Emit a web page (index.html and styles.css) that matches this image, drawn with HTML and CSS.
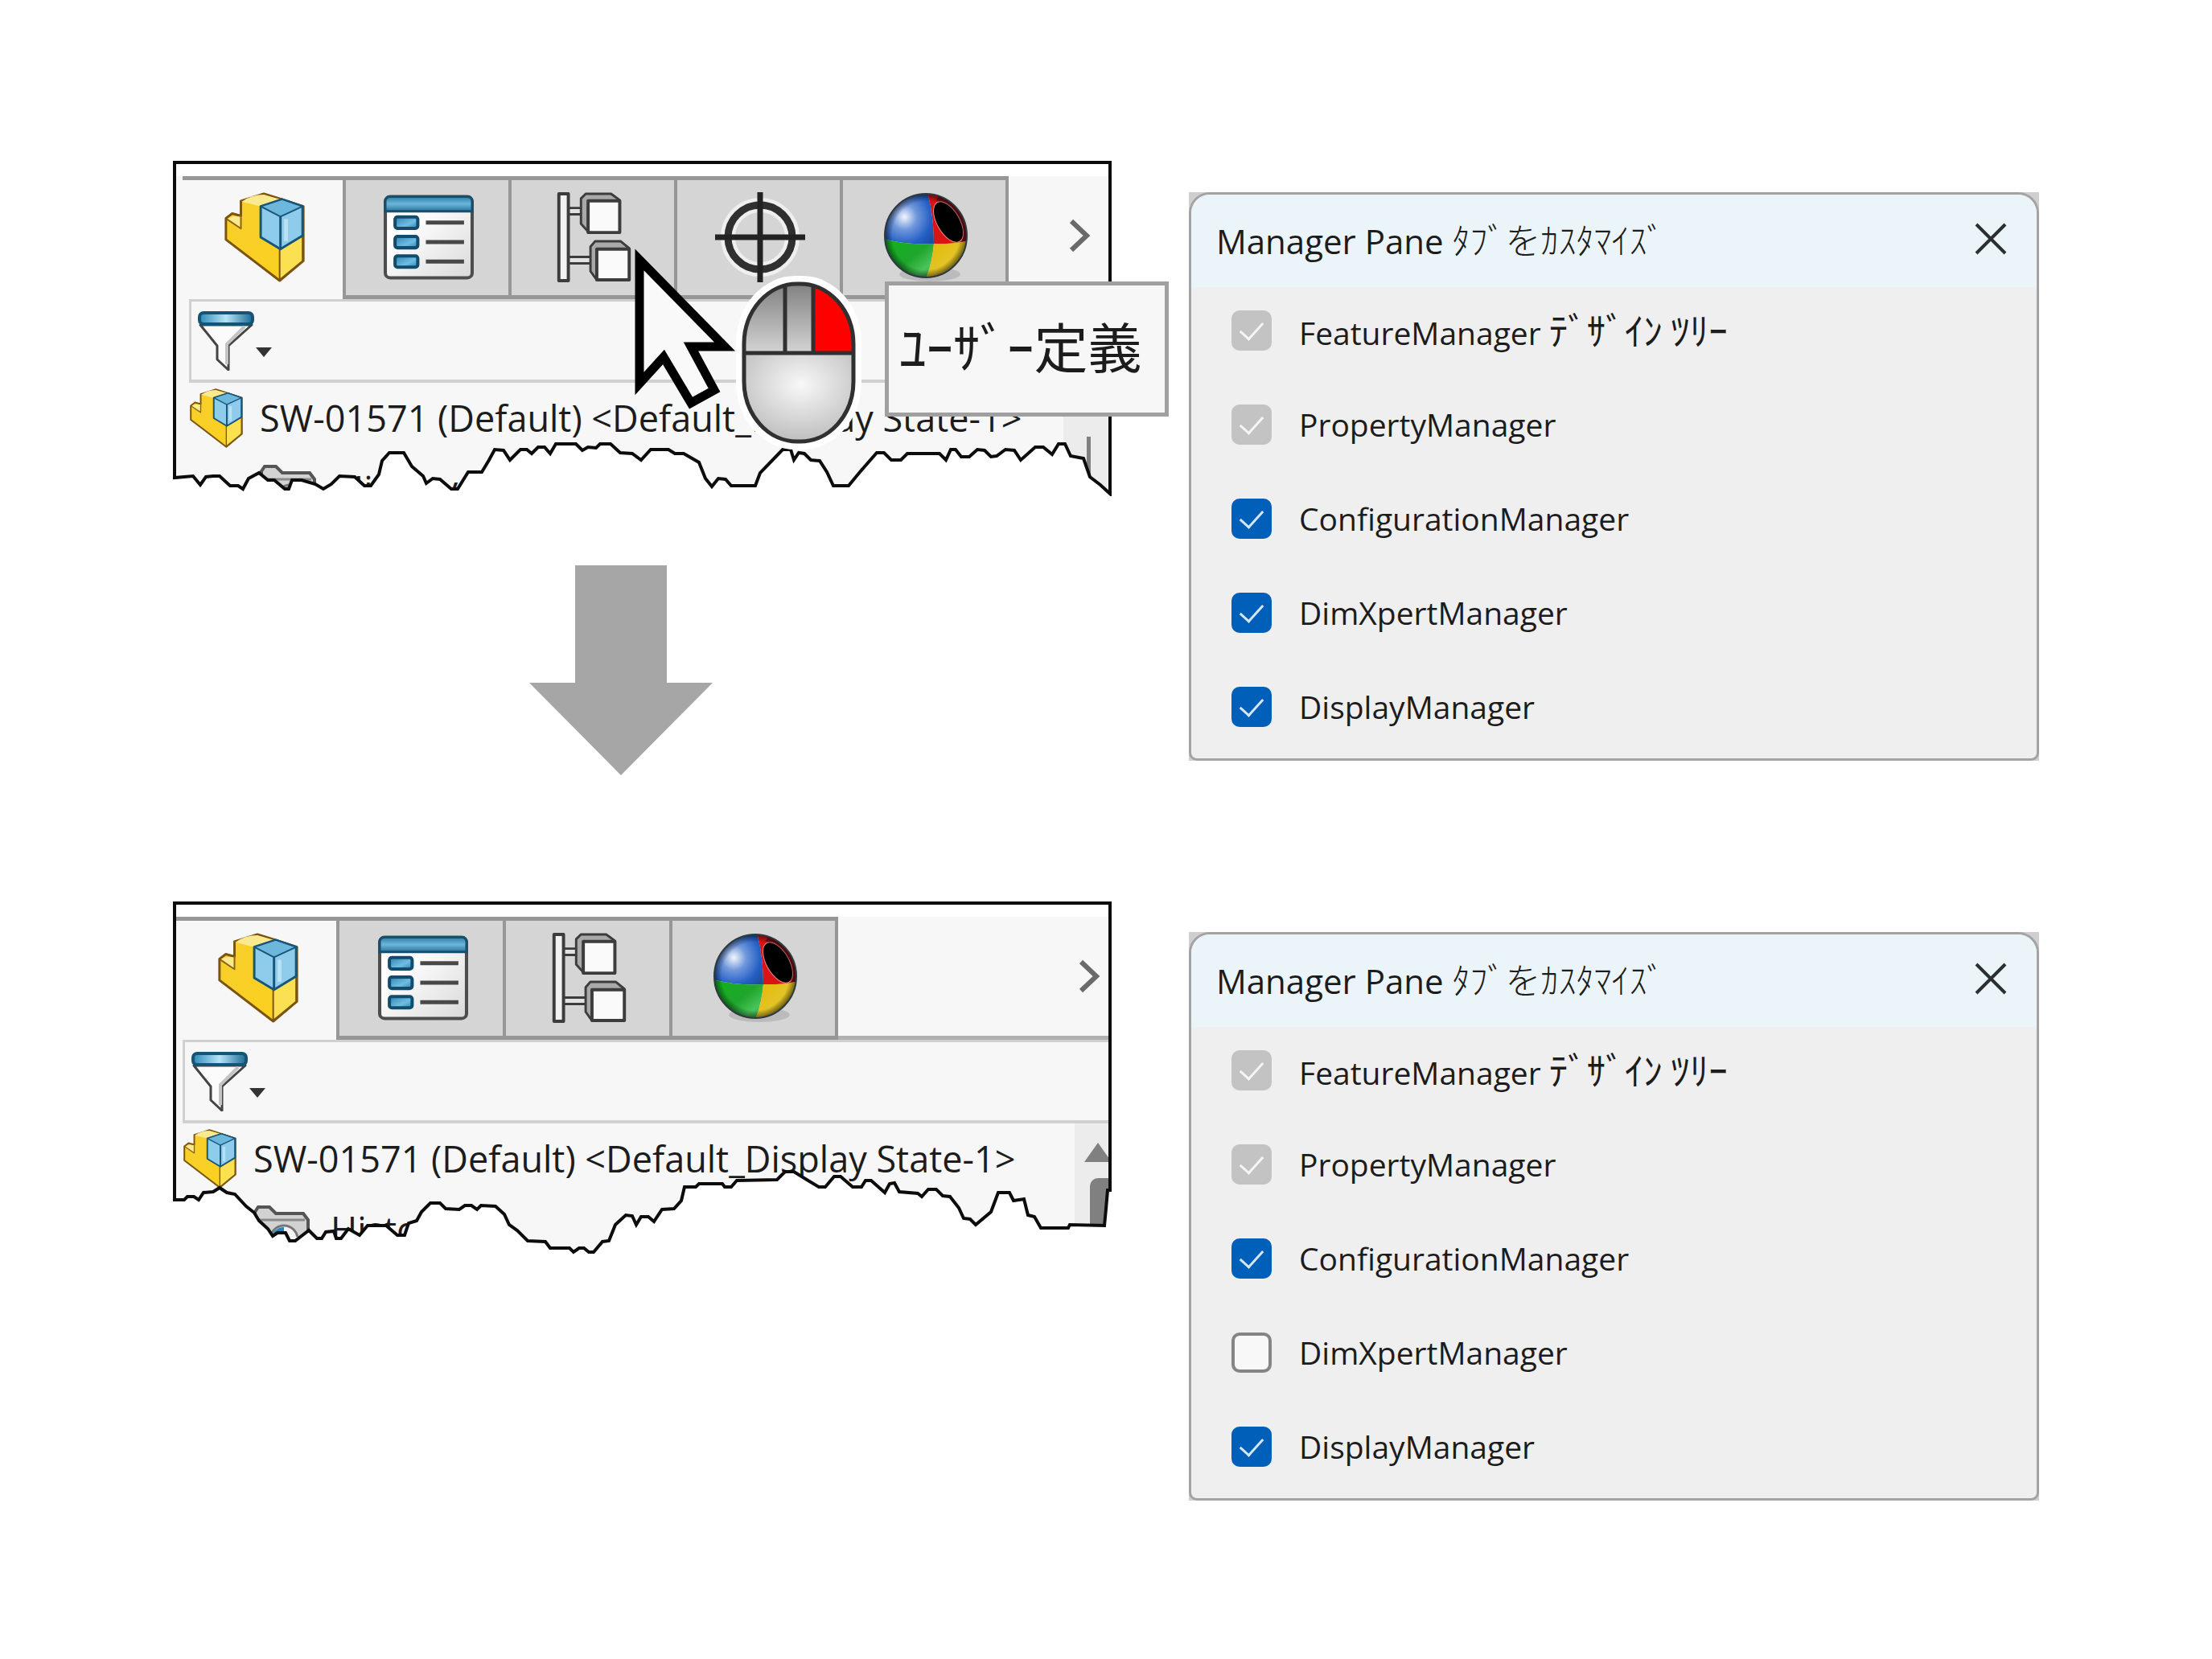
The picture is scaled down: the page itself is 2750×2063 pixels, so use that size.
FILE: index.html
```html
<!DOCTYPE html>
<html lang="ja">
<head>
<meta charset="utf-8">
<meta name="viewport" content="width=device-width, initial-scale=1">
<title>Manager Pane</title>
<link rel="stylesheet" href="styles.css">
</head>
<body>
<svg class="defs" aria-hidden="true">
  <defs>
    <linearGradient id="gBar" x1="0" y1="0" x2="0" y2="1"><stop offset="0" stop-color="#2f7ca3"/><stop offset=".5" stop-color="#6cb6dd"/><stop offset="1" stop-color="#2a7297"/></linearGradient>
    <linearGradient id="gBox" x1="0" y1="0" x2="1" y2="1"><stop offset="0" stop-color="#2d83b0"/><stop offset=".6" stop-color="#6fbde4"/><stop offset="1" stop-color="#2d83b0"/></linearGradient>
    <linearGradient id="gSheet" x1="0" y1="0" x2="1" y2="1"><stop offset=".3" stop-color="#fff"/><stop offset="1" stop-color="#d9d9d9"/></linearGradient>
    <linearGradient id="gRim" x1="0" y1="0" x2="1" y2="0"><stop offset="0" stop-color="#2f8bb8"/><stop offset=".5" stop-color="#b5e4f8"/><stop offset="1" stop-color="#1b6b94"/></linearGradient>
    <linearGradient id="gYellow" x1="0" y1="0" x2="1" y2="1"><stop offset="0" stop-color="#f7cf2e"/><stop offset="1" stop-color="#fbd01c"/></linearGradient>
    <radialGradient id="gBlue" cx=".42" cy=".48" r=".7"><stop offset="0" stop-color="#f2f6fd"/><stop offset=".35" stop-color="#6f97dc"/><stop offset=".75" stop-color="#245fc4"/><stop offset="1" stop-color="#1d4f9f"/></radialGradient>
    <linearGradient id="gGreen" x1="0" y1="0" x2="1" y2="1"><stop offset="0" stop-color="#12b41c"/><stop offset=".5" stop-color="#1fa52c"/><stop offset=".75" stop-color="#49c35a"/><stop offset="1" stop-color="#2f9a3d"/></linearGradient>
    <linearGradient id="gGold" x1="0" y1="0" x2="1" y2="1"><stop offset="0" stop-color="#e6b800"/><stop offset=".5" stop-color="#e3c326"/><stop offset="1" stop-color="#8d7a10"/></linearGradient>
    <radialGradient id="gShade" cx=".5" cy=".5" r=".5"><stop offset=".8" stop-color="#000" stop-opacity="0"/><stop offset="1" stop-color="#000" stop-opacity=".55"/></radialGradient>
    <radialGradient id="gMouse" cx=".52" cy=".35" r=".65"><stop offset="0" stop-color="#f8f8f8"/><stop offset="1" stop-color="#bdbdbd"/></radialGradient>
    <linearGradient id="gKey" x1="0" y1="0" x2="0" y2="1"><stop offset="0" stop-color="#7f7f7f"/><stop offset="1" stop-color="#d6d6d6"/></linearGradient>
    <clipPath id="cBall"><ellipse cx="53" cy="54" rx="51" ry="52"/></clipPath>
    <clipPath id="cMouse"><rect x="11" y="11" width="138" height="198" rx="67" ry="76"/></clipPath>
  </defs>
  <symbol id="part" viewBox="0 0 102 114">
    <g stroke-linejoin="round">
      <path d="M2 33 10 27 21 30V11L50 2 73 9 100 18V87L70 112 2 60Z" fill="url(#gYellow)" stroke="#7a5410" stroke-width="3"/>
      <path d="M22 12Q34 3 50 3L70 9 46 18Z" fill="#fbe98f"/>
      <path d="M4 34Q9 29 20 31V45Z" fill="#fbe98f"/>
      <path d="M21 29V46L3 34" fill="none" stroke="#8a6418" stroke-width="2"/>
      <path d="M70 72 99 55V87L70 111Z" fill="#fbe052" stroke="#7a5410" stroke-width="2"/>
      <path d="M73 9 99 18V55L71 72 46 57V18Z" fill="#8fcbea" stroke="#17567a" stroke-width="3"/>
      <path d="M46 18 73 9 99 18 71 31Z" fill="#6db7dc" stroke="#17567a" stroke-width="2"/>
      <path d="M71 31V72" stroke="#17567a" stroke-width="3"/>
      <path d="M78 34V62" stroke="#b9e1f4" stroke-width="5"/>
    </g>
  </symbol>
  <symbol id="props" viewBox="0 0 111 104">
    <rect x="2" y="2" width="107" height="100" rx="6" fill="url(#gSheet)" stroke="#4d4d4d" stroke-width="4"/>
    <path d="M2 20V8Q2 2 8 2H103Q109 2 109 8V20Z" fill="url(#gBar)" stroke="#174f6e" stroke-width="3"/>
    <g fill="url(#gBox)" stroke="#134c6b" stroke-width="4"><rect x="14" y="27" width="28" height="14" rx="3"/><rect x="14" y="51" width="28" height="14" rx="3"/><rect x="14" y="75" width="28" height="14" rx="3"/></g>
    <path d="M52 34H99M52 58H99M52 82H99" stroke="#484848" stroke-width="5"/>
  </symbol>
  <symbol id="config" viewBox="0 0 94 114">
    <g stroke="#3c3c3c" stroke-width="4" stroke-linejoin="round">
      <path d="M12 20H38V28H12ZM12 82H50V90H12Z" fill="#e2e2e2" stroke-width="3"/>
      <rect x="2" y="2" width="12" height="110" fill="#f2f2f2"/>
      <path d="M39 50 30 40V8L36 2H68L79 10V18H39Z" fill="#a9a9a9" stroke-width="3"/>
      <rect x="39" y="11" width="40" height="40" fill="#fafafa"/>
      <path d="M50 111 42 100V69L48 62H80L91 71V78H50Z" fill="#a9a9a9" stroke-width="3"/>
      <rect x="50" y="72" width="41" height="39" fill="#fafafa"/>
    </g>
  </symbol>
  <symbol id="target" viewBox="0 0 112 112">
    <circle cx="56" cy="56" r="40" fill="none" stroke="#efefef" stroke-width="18"/>
    <circle cx="56" cy="56" r="40" fill="none" stroke="#303030" stroke-width="9"/>
    <path d="M56 0V112M0 56H112" stroke="#222" stroke-width="7"/>
  </symbol>
  <symbol id="ball" viewBox="0 0 106 112">
    <ellipse cx="58" cy="102" rx="38" ry="9" fill="#000" opacity=".12"/>
    <g clip-path="url(#cBall)">
      <path d="M0 0H55Q63 30 63 64 30 66 0 58Z" fill="url(#gBlue)"/>
      <path d="M55 0H106V62Q84 65 63 64 63 30 55 0Z" fill="#d81414"/>
      <path d="M72 0H106V62L98 62Q100 30 66 10Z" fill="#7c0f12"/>
      <path d="M0 58Q30 66 63 64 61 90 51 112H0Z" fill="url(#gGreen)"/>
      <path d="M63 64Q84 65 106 60V112H51Q61 90 63 64Z" fill="url(#gGold)"/>
      <ellipse cx="81" cy="37" rx="14" ry="28" transform="rotate(-30 81 37)" fill="#000" stroke="#f08a8a" stroke-width="1"/>
      <ellipse cx="53" cy="54" rx="52" ry="53" fill="url(#gShade)"/>
    </g>
    <ellipse cx="53" cy="54" rx="51" ry="52" fill="none" stroke="#2e3a3f" stroke-width="2"/>
  </symbol>
  <symbol id="funnel" viewBox="0 0 70 74">
    <path d="M3 17 24 43V60L38 73V43L67 17Z" fill="#fbfbfb" stroke="#444" stroke-width="3" stroke-linejoin="round"/>
    <path d="M58 19 36 41V66" fill="none" stroke="#c4c4c4" stroke-width="4"/>
    <rect x="2" y="2" width="66" height="14" rx="5" fill="url(#gRim)" stroke="#155474" stroke-width="4"/>
  </symbol>
  <symbol id="folder" viewBox="0 0 70 60">
    <path d="M2 58V8L6 2H20L28 10H62L68 18V58Z" fill="#d2d2d2" stroke="#555" stroke-width="4"/>
    <path d="M4 18H64" stroke="#8a8a8a" stroke-width="3"/>
    <circle cx="38" cy="42" r="17" fill="#f4f4f4" stroke="#777" stroke-width="3"/>
    <path d="M38 42H22A16 16 0 0 1 38 27Z" fill="#2487b5"/>
  </symbol>
  <symbol id="chevron" viewBox="0 0 28 42"><path d="M4 3 23 21 4 39" fill="none" stroke="#6a6a6a" stroke-width="6"/></symbol>
  <symbol id="close" viewBox="0 0 40 40"><path d="M2 2 38 38M38 2 2 38" stroke="#2b2f31" stroke-width="4"/></symbol>
</svg>

<main class="board">
  <div class="column">
    <section class="panel panel-before">
      <div class="tabs" role="tablist">
        <button class="tab tab-active" type="button" role="tab" aria-label="FeatureManager"><svg class="icon"><use href="#part"/></svg></button>
        <button class="tab" type="button" role="tab" aria-label="PropertyManager"><svg class="icon"><use href="#props"/></svg></button>
        <button class="tab" type="button" role="tab" aria-label="ConfigurationManager"><svg class="icon"><use href="#config"/></svg></button>
        <button class="tab" type="button" role="tab" aria-label="DimXpertManager"><svg class="icon"><use href="#target"/></svg></button>
        <button class="tab tab-last" type="button" role="tab" aria-label="DisplayManager"><svg class="icon"><use href="#ball"/></svg></button>
        <div class="more"><button class="plain" type="button" aria-label="Next"><svg class="chevron"><use href="#chevron"/></svg></button></div>
      </div>
      <div class="filter"><button class="plain filter-button" type="button" aria-label="Filter"><svg class="funnel"><use href="#funnel"/></svg><span class="caret"></span></button></div>
      <div class="tree-area">
        <ul class="tree">
          <li class="node"><svg class="node-icon"><use href="#part"/></svg><span>SW-01571 (Default) &lt;Default_Display State-1&gt;</span></li>
          <li class="node node-child"><svg class="folder"><use href="#folder"/></svg><span>History</span></li>
        </ul>
        <div class="scroll"><span class="thumb thumb-thin"></span></div>
      </div>
      <svg class="torn" viewBox="0 0 1167 417" preserveAspectRatio="none" aria-hidden="true">
        <path class="torn-paper" d="M0 417V392L25 392 34 403 41 393 50 392 58 392 71 404 81 404 87 408 94 395 107 388 118 397 126 397 139 408 144 408 148 397 160 397 177 402 187 408 197 402 207 392 226 393 238 404 246 404 256 390 260 373 269 363 287 363 297 380 311 392 315 401 323 395 332 396 346 408 354 408 367 387 384 387 393 372 400 359 411 360 419 372 432 359 440 359 446 364 454 356 462 356 469 364 476 352 501 352 509 360 516 356 526 357 531 352 544 352 556 363 571 364 582 372 594 359 616 359 624 364 635 364 654 375 662 395 670 405 678 395 687 396 694 404 724 404 730 388 758 359 768 359 772 372 778 363 785 364 793 372 804 373 813 387 821 404 840 404 854 387 875 363 884 363 893 372 905 372 913 364 953 364 961 372 967 359 973 359 980 368 990 368 1000 359 1009 360 1017 368 1024 367 1035 359 1046 360 1054 372 1072 356 1082 356 1093 365 1101 352 1109 352 1116 367 1132 370 1140 393 1153 403 1165 415 1167 417Z"/>
        <path class="torn-line" d="M2 394V2H1165V414L1153 403 1140 393 1132 370 1116 367 1109 352 1101 352 1093 365 1082 356 1072 356 1054 372 1046 360 1035 359 1024 367 1017 368 1009 360 1000 359 990 368 980 368 973 359 967 359 961 372 953 364 913 364 905 372 893 372 884 363 875 363 854 387 840 404 821 404 813 387 804 373 793 372 785 364 778 363 772 372 768 359 758 359 730 388 724 404 694 404 687 396 678 395 670 405 662 395 654 375 635 364 624 364 616 359 594 359 582 372 571 364 556 363 544 352 531 352 526 357 516 356 509 360 501 352 476 352 469 364 462 356 454 356 446 364 440 359 432 359 419 372 411 360 400 359 393 372 384 387 367 387 354 408 346 408 332 396 323 395 315 401 311 392 297 380 287 363 269 363 260 373 256 390 246 404 238 404 226 393 207 392 197 402 187 408 177 402 160 397 148 397 144 408 139 408 126 397 118 397 107 388 94 395 87 408 81 404 71 404 58 392 50 392 41 393 34 403 25 392Z"/>
      </svg>
      <svg class="cursor" viewBox="0 0 130 204" aria-hidden="true"><path d="M8 15V169L38 136 72 193 101 177 72 123H114Z" fill="#f9f9f9" stroke="#000" stroke-width="11"/></svg>
      <svg class="mouse" viewBox="0 0 160 220" aria-hidden="true">
        <rect x="2" y="2" width="156" height="216" rx="74" ry="84" fill="#fff"/>
        <g clip-path="url(#cMouse)">
          <rect x="10" y="10" width="140" height="90" fill="url(#gKey)"/>
          <rect x="98" y="10" width="52" height="88" fill="#f00"/>
          <rect x="10" y="98" width="140" height="112" fill="url(#gMouse)"/>
          <path d="M63 10V98M98 10V98M10 98H150" stroke="#303030" stroke-width="5"/>
        </g>
        <rect x="12" y="12" width="136" height="196" rx="66" ry="75" fill="none" stroke="#303030" stroke-width="5"/>
      </svg>
      <div class="tip" role="tooltip">ﾕｰｻﾞｰ定義</div>
    </section>

    <svg class="arrow" viewBox="0 0 228 261" aria-hidden="true"><path d="M57 0H171V146H228L114 261 0 146H57Z" fill="#a6a6a6"/></svg>

    <section class="panel panel-after">
      <div class="tabs" role="tablist">
        <button class="tab tab-active" type="button" role="tab" aria-label="FeatureManager"><svg class="icon"><use href="#part"/></svg></button>
        <button class="tab" type="button" role="tab" aria-label="PropertyManager"><svg class="icon"><use href="#props"/></svg></button>
        <button class="tab" type="button" role="tab" aria-label="ConfigurationManager"><svg class="icon"><use href="#config"/></svg></button>
        <button class="tab tab-last" type="button" role="tab" aria-label="DisplayManager"><svg class="icon"><use href="#ball"/></svg></button>
        <div class="more"><button class="plain" type="button" aria-label="Next"><svg class="chevron"><use href="#chevron"/></svg></button></div>
      </div>
      <div class="filter"><button class="plain filter-button" type="button" aria-label="Filter"><svg class="funnel"><use href="#funnel"/></svg><span class="caret"></span></button></div>
      <div class="tree-area">
        <ul class="tree">
          <li class="node"><svg class="node-icon"><use href="#part"/></svg><span>SW-01571 (Default) &lt;Default_Display State-1&gt;</span></li>
          <li class="node node-child"><svg class="folder"><use href="#folder"/></svg><span>History</span></li>
        </ul>
        <div class="scroll"><span class="up"></span><span class="thumb"></span></div>
      </div>
      <svg class="torn" viewBox="0 0 1167 439" preserveAspectRatio="none" aria-hidden="true">
        <path class="torn-paper" d="M0 439V371L14 371 18 367 26 367 32 371 38 362 50 361 58 356 67 362 77 364 91 379 101 387 107 397 118 407 124 416 130 412 140 412 145 422 152 422 169 409 179 419 185 419 190 411 200 410 203 419 209 419 218 407 232 415 242 403 265 403 279 415 288 415 293 400 303 397 309 386 320 375 332 375 339 382 356 383 363 378 371 378 378 383 383 378 401 379 412 389 418 402 428 409 441 422 463 423 469 431 493 431 498 436 505 431 511 431 517 436 523 436 534 423 542 422 550 402 563 390 571 391 576 402 582 392 591 392 598 398 608 383 623 382 632 372 636 355 650 355 654 351 683 351 686 355 694 355 701 347 751 346 761 336 772 336 788 346 803 355 811 355 822 342 830 342 845 355 856 355 861 347 868 347 885 362 891 351 897 350 903 361 926 363 931 367 939 358 949 358 957 366 966 367 977 381 983 394 991 395 998 402 1017 386 1026 362 1040 362 1045 372 1058 370 1063 390 1071 392 1079 406 1113 406 1115 402 1158 403 1160 382 1162 359 1167 359V439Z"/>
        <path class="torn-line" d="M2 371V2H1165V359L1162 359 1160 382 1158 403 1115 402 1113 406 1079 406 1071 392 1063 390 1058 370 1045 372 1040 362 1026 362 1017 386 998 402 991 395 983 394 977 381 966 367 957 366 949 358 939 358 931 367 926 363 903 361 897 350 891 351 885 362 868 347 861 347 856 355 845 355 830 342 822 342 811 355 803 355 788 346 772 336 761 336 751 346 701 347 694 355 686 355 683 351 654 351 650 355 636 355 632 372 623 382 608 383 598 398 591 392 582 392 576 402 571 391 563 390 550 402 542 422 534 423 523 436 517 436 511 431 505 431 498 436 493 431 469 431 463 423 441 422 428 409 418 402 412 389 401 379 383 378 378 383 371 378 363 378 356 383 339 382 332 375 320 375 309 386 303 397 293 400 288 415 279 415 265 403 242 403 232 415 218 407 209 419 203 419 200 410 190 411 185 419 179 419 169 409 152 422 145 422 140 412 130 412 124 416 118 407 107 397 101 387 91 379 77 364 67 362 58 356 50 361 38 362 32 371 26 367 18 367 14 371Z"/>
      </svg>
    </section>
  </div>

  <div class="column column-dialogs">
    <section class="dialog" aria-labelledby="title-a">
      <div class="dialog-frame">
      <header class="dialog-head">
        <h2 class="dialog-title" id="title-a">Manager Pane <span class="kana">ﾀﾌﾞをｶｽﾀﾏｲｽﾞ</span></h2>
        <button class="plain" type="button" aria-label="Close"><svg class="close"><use href="#close"/></svg></button>
      </header>
      <div class="options">
        <label class="option"><input class="check" type="checkbox" checked disabled><span>FeatureManager <span class="kana-option">ﾃﾞｻﾞｲﾝ ﾂﾘｰ</span></span></label>
        <label class="option"><input class="check" type="checkbox" checked disabled><span>PropertyManager</span></label>
        <label class="option"><input class="check" type="checkbox" checked><span>ConfigurationManager</span></label>
        <label class="option"><input class="check" type="checkbox" checked><span>DimXpertManager</span></label>
        <label class="option"><input class="check" type="checkbox" checked><span>DisplayManager</span></label>
      </div>
      </div>
    </section>
    <section class="dialog" aria-labelledby="title-b">
      <div class="dialog-frame">
      <header class="dialog-head">
        <h2 class="dialog-title" id="title-b">Manager Pane <span class="kana">ﾀﾌﾞをｶｽﾀﾏｲｽﾞ</span></h2>
        <button class="plain" type="button" aria-label="Close"><svg class="close"><use href="#close"/></svg></button>
      </header>
      <div class="options">
        <label class="option"><input class="check" type="checkbox" checked disabled><span>FeatureManager <span class="kana-option">ﾃﾞｻﾞｲﾝ ﾂﾘｰ</span></span></label>
        <label class="option"><input class="check" type="checkbox" checked disabled><span>PropertyManager</span></label>
        <label class="option"><input class="check" type="checkbox" checked><span>ConfigurationManager</span></label>
        <label class="option"><input class="check" type="checkbox"><span>DimXpertManager</span></label>
        <label class="option"><input class="check" type="checkbox" checked><span>DisplayManager</span></label>
      </div>
      </div>
    </section>
  </div>
</main>
</body>
</html>
```
FILE: styles.css
```css
* { box-sizing: border-box; }

body {
  margin: 0;
  background: #fff;
  color: #1c1c1c;
  font-family: "Open Sans", "Noto Sans CJK JP", sans-serif;
}

.defs { position: absolute; width: 0; height: 0; }

.board {
  display: grid;
  grid-template-columns: 1167fr 1057fr;
  gap: 96px;
  padding: 200px 215px;
}

.column { display: flex; flex-direction: column; min-width: 0; }
.column-dialogs { gap: 213px; padding-top: 39px; }

.plain {
  display: flex;
  align-items: center;
  padding: 0;
  border: 0;
  background: none;
}

/* Torn screenshots of the manager pane */
.panel {
  position: relative;
  padding-top: 19px;
  background: linear-gradient(#fff 19px, #f7f7f7 19px);
}
.panel-before { height: 417px; padding-left: 12px; }
.panel-after { height: 439px; padding-left: 4px; }

.tabs { display: flex; height: 153px; }
.tab {
  display: flex;
  flex: none;
  align-items: center;
  justify-content: center;
  width: 206px;
  padding: 0 0 2px 4px;
  border: solid #979797;
  border-width: 5px 0 5px 4px;
  background: #d5d5d5;
}
.panel-after .tab { width: 207px; }
.panel .tab-active {
  width: 199px;
  border-left: 0;
  border-bottom-color: #f7f7f7;
  background: #f7f7f7;
}
.panel .tab-last { width: 210px; border-right-width: 4px; }
.icon { width: 112px; height: 112px; }

.more {
  display: flex;
  flex: 1;
  align-items: center;
  justify-content: flex-end;
  padding-right: 14px;
  border-bottom: 5px solid #b0b0b0;
}
.panel-before .more { padding-right: 26px; }
.chevron { width: 28px; height: 42px; }

.filter {
  display: flex;
  height: 104px;
  margin-left: 8px;
  padding-left: 8px;
  border: solid #d0d0d0;
  border-width: 3px 0 4px 3px;
}
.filter-button { gap: 2px; }
.funnel { width: 70px; height: 74px; }
.caret {
  margin-top: 28px;
  border: solid transparent;
  border-width: 12px 10px 0;
  border-top-color: #333;
}

.tree-area { display: flex; height: 141px; overflow: hidden; }
.tree {
  flex: 1;
  min-width: 0;
  margin: 0;
  padding: 0;
  list-style: none;
  font-size: 45px;
  line-height: 88px;
  white-space: nowrap;
}
.node { display: flex; align-items: center; gap: 19px; height: 88px; padding-left: 7px; }
.node-icon { width: 70px; height: 74px; }
.node-child { gap: 26px; padding-left: 96px; }
.folder { width: 70px; height: 60px; }

.scroll {
  display: flex;
  flex-direction: column;
  align-items: flex-end;
  gap: 20px;
  width: 46px;
  padding-top: 24px;
  background: #ececec;
}
.panel-before .scroll { width: 60px; padding: 67px 26px 0 0; }
.up { border: solid transparent; border-width: 0 17px 24px; border-bottom-color: #808080; }
.thumb { width: 27px; height: 100px; border-radius: 10px 0 0 0; background: #808080; }
.thumb-thin { width: 5px; border-radius: 0; }

.torn { position: absolute; inset: 0; width: 100%; height: 100%; }
.torn-paper { fill: #fff; }
.torn-line { fill: none; stroke: #0c0c0c; stroke-width: 4px; vector-effect: non-scaling-stroke; }

.cursor { position: absolute; left: 572px; top: 108px; width: 130px; height: 204px; }
.mouse { position: absolute; left: 698px; top: 141px; width: 160px; height: 220px; }
.tip {
  position: absolute;
  left: 885px;
  top: 150px;
  width: 353px;
  height: 168px;
  padding-left: 13px;
  border: 5px solid #a0a0a0;
  background: #f7f7f7;
  font-family: "Noto Sans CJK JP", sans-serif;
  font-size: 67px;
  line-height: 148px;
  white-space: nowrap;
}

.arrow { width: 228px; height: 261px; margin: 86px 0 157px 443px; }

/* Tab chooser dialogs */
.dialog { background: #cfcfcf; }
.dialog-frame {
  overflow: hidden;
  border: 3px solid #a3a3a3;
  border-radius: 26px 26px 10px 10px;
  background: #efefef;
}
.dialog-head {
  display: flex;
  align-items: center;
  justify-content: space-between;
  height: 115px;
  padding: 0 37px 6px 31px;
  background: #ebf4f8;
}
.dialog-title { margin: 0; font-size: 42px; font-weight: 400; white-space: nowrap; }
.kana { font-family: "Noto Sans CJK JP", sans-serif; font-size: 44px; font-weight: 300; }
.close { width: 40px; height: 40px; }

.options {
  display: flex;
  flex-direction: column;
  gap: 67px;
  padding: 29px 50px 39px;
  font-size: 39px;
}
.option { display: flex; align-items: center; gap: 34px; height: 50px; line-height: 50px; white-space: nowrap; }
.kana-option { font-family: "Noto Sans CJK JP", sans-serif; font-size: 47px; }

.check {
  display: grid;
  flex: none;
  place-items: center;
  width: 50px;
  height: 50px;
  margin: 0;
  border: 4px solid #858585;
  border-radius: 10px;
  background: #f8f8f8;
  appearance: none;
}
.check:checked { border-color: #005fb8; background: #005fb8; }
.check:checked::before {
  content: "";
  width: 25px;
  height: 13px;
  margin-bottom: 6px;
  border: solid #d5e6f5;
  border-width: 0 0 3px 3px;
  transform: rotate(-48deg);
}
.check:disabled { border-color: #c3c3c3; background: #c3c3c3; }
.check:disabled::before { border-color: #f5f5f5; }
```
